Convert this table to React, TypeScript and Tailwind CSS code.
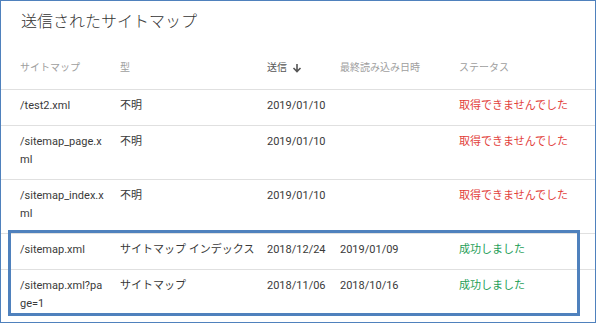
import React from 'react'

type Row = {
  path: React.ReactNode
  type: string
  sent: string
  read: string
  status: 'ok' | 'ng'
}

const ROWS: Row[] = [
  { path: '/test2.xml', type: '不明', sent: '2019/01/10', read: '', status: 'ng' },
  { path: <>/sitemap_page.x<wbr />ml</>, type: '不明', sent: '2019/01/10', read: '', status: 'ng' },
  { path: <>/sitemap_index.x<wbr />ml</>, type: '不明', sent: '2019/01/10', read: '', status: 'ng' },
  { path: '/sitemap.xml', type: 'サイトマップ インデックス', sent: '2018/12/24', read: '2019/01/09', status: 'ok' },
  { path: <>/sitemap.xml?pa<wbr />ge=1</>, type: 'サイトマップ', sent: '2018/11/06', read: '2018/10/16', status: 'ok' },
]

const COLS = 'grid grid-cols-[119px_147px_73px_119px_1fr]'

function SortArrow() {
  return (
    <svg width="10" height="10" viewBox="0 0 10 10" className="ml-[5px]">
      <path d="M5 1v7.5M1.5 5l3.5 3.5L8.5 5" fill="none" stroke="#555" strokeWidth="1.6" />
    </svg>
  )
}

export default function App() {
  return (
    <div
      className="relative w-[596px] h-[323px] overflow-hidden bg-white border border-[#4f81bd]"
      style={{ fontFamily: "Roboto, 'Noto Sans CJK JP', sans-serif" }}
    >
      <h1 className="pl-[20px] pt-[10px] text-[16px] leading-[22px] font-light text-[#333]">送信されたサイトマップ</h1>

      {/* header */}
      <div className={`${COLS} pt-[27px] pb-[13px] text-[10px] leading-[16px] text-[#9e9e9e]`}>
        <div className="pl-[19px]">サイトマップ</div>
        <div>型</div>
        <div className="flex items-center text-[#555]">
          送信
          <SortArrow />
        </div>
        <div>最終読み込み日時</div>
        <div>ステータス</div>
      </div>

      {/* rows */}
      {ROWS.map((r, i) => (
        <div
          key={i}
          className={`${COLS} border-t border-[#e0e0e0] pt-[7px] pb-[10px] text-[11px] leading-[18px] text-[#3a3a3a]`}
        >
          <div className="pl-[19px] pr-[10px]">{r.path}</div>
          <div>{r.type}</div>
          <div>{r.sent}</div>
          <div>{r.read}</div>
          <div className={r.status === 'ok' ? 'text-[#1e9e57]' : 'text-[#e2403a]'}>
            {r.status === 'ok' ? '成功しました' : '取得できませんでした'}
          </div>
        </div>
      ))}

      {/* highlight annotation */}
      <div className="absolute left-[7px] top-[229px] w-[572px] h-[86px] border-[3px] border-[#4f81bd] pointer-events-none" />
    </div>
  )
}
